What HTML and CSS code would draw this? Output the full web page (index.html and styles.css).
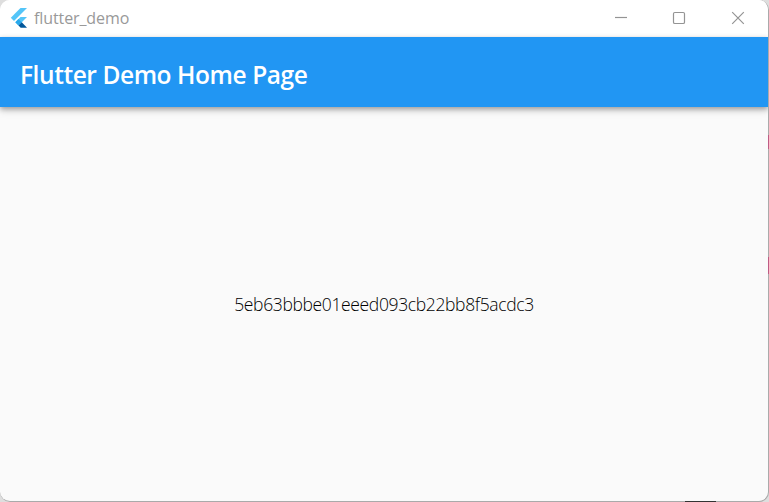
FILE: index.html
```html
<!DOCTYPE html>
<html lang="en">
<head>
<meta charset="utf-8">
<title>flutter_demo</title>
<link rel="stylesheet" href="styles.css">
</head>
<body>
<div class="window">
  <header class="titlebar">
    <svg class="logo" width="18" height="20" viewBox="0 0 18 20">
      <path fill="#54c5f8" d="M10.500 0H17L4 13 .8 9.700z"/>
      <path fill="#54c5f8" d="M10.500 9H17L11.800 14.200 8.500 17.500 5.300 14.200z"/>
      <path fill="#29a8ea" d="M5.300 14.200 8.500 11 11.800 14.200 8.500 17.500z"/>
      <path fill="#01579b" d="M8.500 17.500 11.800 14.200 17 19.700H10.700z"/>
    </svg>
    <span class="caption">flutter_demo</span>
    <div class="controls">
      <svg width="58" height="37" viewBox="0 0 58 37"><path d="M15 17.500H27"/></svg>
      <svg width="59" height="37" viewBox="0 0 59 37"><rect x="15.500" y="12.500" width="11" height="11" rx="1.300"/></svg>
      <svg width="58" height="37" viewBox="0 0 58 37"><path d="M15.200 12.200 26.800 23.800M26.800 12.200 15.200 23.800"/></svg>
    </div>
  </header>
  <div class="appbar"><h1>Flutter Demo Home Page</h1></div>
  <main><p>5eb63bbbe01eeed093cb22bb8f5acdc3</p></main>
</div>
<i class="speck speck-a"></i>
<i class="speck speck-b"></i>
<i class="speck speck-c"></i>
</body>
</html>
```
FILE: styles.css
```css
* { box-sizing: border-box; }
body {
  margin: 0;
  height: 502px;
  overflow: hidden;
  position: relative;
  background: #dedede;
  font-family: "Open Sans", "Noto Sans", sans-serif;
}
.window {
  width: 769px;
  height: 502px;
  display: flex;
  flex-direction: column;
  overflow: hidden;
  background: #fafafa;
  border-right: 1px solid #aaa;
  border-bottom: 1px solid #aaa;
  border-radius: 10px;
}
.titlebar {
  height: 37px;
  flex: none;
  display: flex;
  align-items: center;
  padding-left: 10px;
  background: #fff;
}
.logo { flex: none; margin-right: 6px; margin-top: -1px; }
.caption {
  margin-top: -2px;
  font-size: 16px;
  line-height: 22px;
  letter-spacing: -0.1px;
  color: #999;
}
.controls {
  display: flex;
  margin-left: auto;
  margin-right: -7px;
}
.controls svg {
  fill: none;
  stroke: #949494;
  stroke-width: 1.2;
}
.appbar {
  height: 70px;
  flex: none;
  display: flex;
  align-items: center;
  padding: 5px 20px 0;
  background: #2196f3;
  box-shadow: 0 2px 5px rgba(0, 0, 0, .3), 0 4px 8px rgba(0, 0, 0, .12);
  z-index: 1;
}
h1 {
  margin: 0;
  color: #fff;
  font-size: 24.5px;
  font-weight: 600;
  letter-spacing: -0.43px;
  white-space: nowrap;
}
main {
  flex: 1;
  display: flex;
  align-items: center;
  justify-content: center;
}
p {
  margin: 0;
  color: #000;
  font-size: 17.5px;
  font-weight: 300;
  letter-spacing: -0.36px;
}
.speck { position: absolute; background: #bd5c85; }
.speck-a { left: 768px; top: 135px; width: 1px; height: 14px; }
.speck-b { left: 768px; top: 257px; width: 1px; height: 17px; }
.speck-c { left: 685px; top: 501px; width: 31px; height: 1px; background: #333; }
```
